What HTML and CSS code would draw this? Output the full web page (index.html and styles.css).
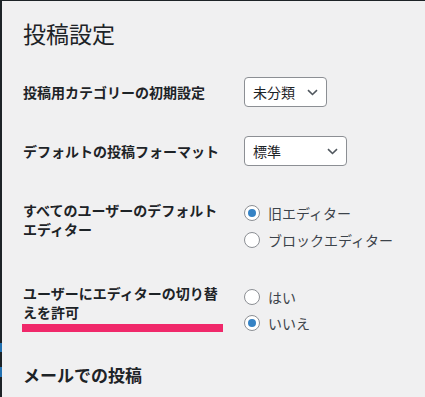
FILE: index.html
```html
<!DOCTYPE html>
<html lang="ja">
<head>
<meta charset="UTF-8" />
<title>投稿設定</title>
<link rel="stylesheet" href="styles.css">
</head>
<body>
  <div class="adminbar"></div>
  <div class="screen">
    <div class="sidebar">
      <div class="seg seg-top"></div>
      <div class="seg seg-blue seg-b1"></div>
      <div class="seg seg-mid"></div>
      <div class="seg seg-blue seg-b2"></div>
      <div class="seg seg-rest"></div>
    </div>

    <main class="wrap">
      <h1>投稿設定</h1>

      <div class="row row-select row-1">
        <div class="row-th">投稿用カテゴリーの初期設定</div>
        <div class="row-td">
          <div class="select select-cat">
            <span>未分類</span>
            <svg width="11" height="7" viewBox="0 0 11 7"><path d="M1 1.2 L5.5 5.5 L10 1.2" fill="none" stroke="#50575e" stroke-width="1.6"/></svg>
          </div>
        </div>
      </div>

      <div class="row row-select row-2">
        <div class="row-th">デフォルトの投稿フォーマット</div>
        <div class="row-td">
          <div class="select select-format">
            <span>標準</span>
            <svg width="11" height="7" viewBox="0 0 11 7"><path d="M1 1.2 L5.5 5.5 L10 1.2" fill="none" stroke="#50575e" stroke-width="1.6"/></svg>
          </div>
        </div>
      </div>

      <div class="row row-3">
        <div class="row-th th-pad">すべてのユーザーのデフォルトエディター</div>
        <div class="row-td">
          <label class="radio"><span class="dot checked"></span>旧エディター</label>
          <label class="radio"><span class="dot"></span>ブロックエディター</label>
        </div>
      </div>

      <div class="row row-4">
        <div class="row-th">
          ユーザーにエディターの切り替えを許可
          <div class="marker"></div>
        </div>
        <div class="row-td td-tight">
          <label class="radio"><span class="dot"></span>はい</label>
          <label class="radio"><span class="dot checked"></span>いいえ</label>
        </div>
      </div>

      <h2>メールでの投稿</h2>
    </main>
  </div>
</body>
</html>
```

FILE: styles.css
```css
:root {
  --text: #1d2327;
  --muted: #3c434a;
  --border: #8c8f94;
  --blue: #2271b1;
  --font: "Noto Sans CJK JP", "Noto Sans", sans-serif;
}
* {
  box-sizing: border-box;
}
body {
  margin: 0;
  height: 397px;
  overflow: hidden;
  background: #f0f0f1;
  color: var(--text);
  font-family: var(--font);
}
.adminbar {
  height: 1px;
  background: var(--text);
}
.screen {
  display: flex;
  height: 396px;
}

/* left admin menu edge */
.sidebar {
  width: 2px;
  display: flex;
  flex-direction: column;
}
.seg { background: var(--text); }
.seg-top { height: 342px; }
.seg-blue { background: var(--blue); }
.seg-b1 { height: 9px; }
.seg-mid { height: 15px; }
.seg-b2 { height: 10px; }
.seg-rest { flex: 1; }

.wrap {
  flex: 1;
  padding: 18px 0 0 21px;
}

h1 {
  margin: 0;
  font-size: 23px;
  line-height: 29px;
  font-weight: 400;
}

.row {
  display: flex;
  align-items: flex-start;
}
.row-th {
  width: 200px;
  margin-right: 21px;
  font-size: 14px;
  line-height: 19px;
  font-weight: 700;
}
.row-select {
  align-items: center;
}
.row-1 { margin-top: 29px; }
.row-2 { margin-top: 29px; }
.row-3 { margin-top: 33px; }
.row-4 { margin-top: 31px; }
.th-pad { padding-top: 2px; }

.select {
  height: 30px;
  display: flex;
  align-items: center;
  justify-content: space-between;
  padding: 0 8px 0 8px;
  background: #fff;
  border: 1px solid var(--border);
  border-radius: 4px;
  font-size: 14px;
  color: var(--text);
}
.select-cat { width: 83px; }
.select-format { width: 103px; }

.radio {
  height: 27px;
  display: flex;
  align-items: center;
  gap: 8px;
  font-size: 14px;
  color: var(--muted);
}
.td-tight .radio {
  height: 26px;
}
.dot {
  width: 16px;
  height: 16px;
  border: 1px solid var(--border);
  border-radius: 50%;
  background: #fff;
  display: flex;
  align-items: center;
  justify-content: center;
}
.dot.checked::after {
  content: "";
  width: 8px;
  height: 8px;
  border-radius: 50%;
  background: #3582c4;
}

.marker {
  width: 201px;
  height: 8px;
  margin: 2px 0 0 -1px;
  background: #f0286a;
}

h2 {
  margin: 28px 0 0;
  font-size: 17px;
  line-height: 22px;
  font-weight: 700;
}
```
